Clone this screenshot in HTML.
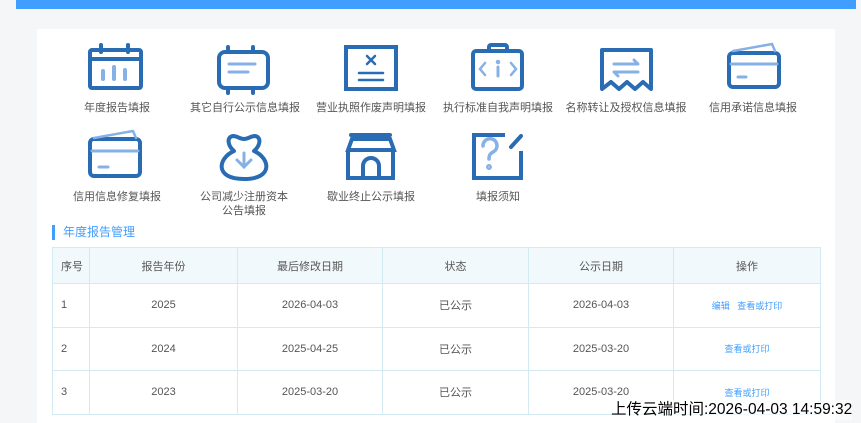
<!DOCTYPE html>
<html><head><meta charset="utf-8"><style>
*{margin:0;padding:0;box-sizing:border-box}
body{width:861px;height:423px;background:#f5f6f8;position:relative;overflow:hidden;font-family:"Liberation Sans","Noto Sans CJK SC",sans-serif;color:#333}
.bar{position:absolute;left:16px;top:0;width:840px;height:9px;background:#409eff}
.panel{position:absolute;left:37px;top:29px;width:798px;height:394px;background:#fff}
.lbl{position:absolute;font-size:11px;color:#555;text-align:center;width:128px;line-height:14px}
.title{position:absolute;left:52px;top:225px;font-size:12px;color:#409eff;line-height:15px;padding-left:8px;border-left:3px solid #409eff}
table{position:absolute;left:52px;top:247px;border-collapse:collapse;font-size:11px;color:#555}
td,th{border:1px solid #d3eaf3;text-align:center;font-weight:normal}
th{background:#f2f9fd;height:36px}
td{height:43.6px}
td.a{color:#409eff;font-size:9px}
.ts{position:absolute;left:611px;top:400px;font-size:15.5px;color:#000;font-family:"Liberation Sans","Noto Sans CJK SC",sans-serif;line-height:20px;background:rgba(255,255,255,.6)}
</style></head><body>
<div class="bar"></div>
<div class="panel"></div>
<svg style="position:absolute;left:0;top:0" width="861" height="423" fill="none" stroke-linecap="round">
<g stroke="#2a6cb3" stroke-width="4">
<rect x="90" y="50" width="51" height="38" rx="2"/><line x1="90" y1="59" x2="141" y2="59"/>
<line x1="101" y1="45" x2="101" y2="52"/><line x1="128" y1="45" x2="128" y2="52"/>
<rect x="219" y="52" width="49" height="36" rx="6"/>
<line x1="228" y1="47" x2="228" y2="52" /><line x1="253" y1="47" x2="253" y2="52"/>
<line x1="228" y1="88" x2="228" y2="93"/><line x1="253" y1="88" x2="253" y2="93"/>
<rect x="346" y="47" width="50" height="42" stroke-linecap="butt"/>
<path d="M367 56l8 8M375 56l-8 8" stroke-width="2.5"/>
<line x1="359" y1="73" x2="383" y2="73" stroke-width="2.5"/><line x1="359" y1="80" x2="383" y2="80" stroke-width="2.5"/>
<rect x="473" y="51" width="49" height="38" rx="3"/>
<path d="M489 51v-4a2 2 0 0 1 2-2h14a2 2 0 0 1 2 2v4"/>
<path d="M602 89V50h49v39l-8-7-8 7-8-7-8 7-8-7z" stroke-linejoin="round"/>
<rect x="729" y="53" width="50" height="34" rx="4"/>
<rect x="90" y="139" width="50" height="37" rx="4"/>
<path d="M234 151c-6-5-8-14-1-15 4 0 7 3 11 3s7-3 11-3c7 1 5 10-1 15 16 7 20 28-10 28s-26-21-10-28z" stroke-linejoin="round"/>
<path d="M348 150l4-11h38l4 11zM348 150v28h45v-28"/><line x1="351" y1="135" x2="390" y2="135"/>
<path d="M363 178v-12a8 8 0 0 1 16 0v12"/>
<path d="M505 135h-31v43h47v-27" stroke-linecap="butt"/>
<line x1="511" y1="147" x2="521" y2="136"/>
</g>
<g stroke="#86b1e6" stroke-width="4">
<line x1="103" y1="71" x2="103" y2="79"/><line x1="114" y1="67" x2="114" y2="79"/><line x1="125" y1="70" x2="125" y2="79"/>
<line x1="229" y1="64" x2="255" y2="64" stroke-width="3"/><line x1="229" y1="72" x2="248" y2="72" stroke-width="3"/>
<path d="M485 63l-5 6 5 6M511 63l5 6-5 6" stroke-width="2.5"/><line x1="498" y1="67" x2="498" y2="76" stroke-width="3"/><circle cx="498" cy="62" r="1" stroke-width="2.5"/>
<path d="M614 64h24l-4-4M638 72h-24l4 4" stroke-width="3" stroke-linejoin="round"/>
<path d="M733 51l39-7 3 7" stroke-width="2.5"/><line x1="731" y1="64" x2="777" y2="64" stroke-width="3"/><line x1="738" y1="77" x2="746" y2="77" stroke-width="3"/>
<path d="M94 138l39-7 3 7" stroke-width="2.5"/><line x1="92" y1="151" x2="138" y2="151" stroke-width="3"/><line x1="99" y1="167" x2="108" y2="167" stroke-width="3"/>
<path d="M244 153v14M237 160l7 7 7-7" stroke-width="3"/>
<path d="M483 146a7 7 0 1 1 10 6c-3 2-4 3-4 7" stroke-width="3.5"/><circle cx="489" cy="167" r="1.2" stroke-width="3.5"/>
</g>
</svg>
<div class="lbl" style="left:53px;top:101px">年度报告填报</div>
<div class="lbl" style="left:180px;top:101px;width:130px">其它自行公示信息填报</div>
<div class="lbl" style="left:306px;top:101px;width:130px">营业执照作废声明填报</div>
<div class="lbl" style="left:433px;top:101px;width:130px">执行标准自我声明填报</div>
<div class="lbl" style="left:561px;top:101px;width:130px">名称转让及授权信息填报</div>
<div class="lbl" style="left:689px;top:101px">信用承诺信息填报</div>
<div class="lbl" style="left:53px;top:190px">信用信息修复填报</div>
<div class="lbl" style="left:180px;top:190px">公司减少注册资本<br>公告填报</div>
<div class="lbl" style="left:307px;top:190px">歇业终止公示填报</div>
<div class="lbl" style="left:434px;top:190px">填报须知</div>
<div class="title">年度报告管理</div>
<table>
<tr><th style="width:37px;text-align:left;padding-left:8px">序号</th><th style="width:148px">报告年份</th><th style="width:145px">最后修改日期</th><th style="width:146px">状态</th><th style="width:145px">公示日期</th><th style="width:147px">操作</th></tr>
<tr><td style="text-align:left;padding-left:8px">1</td><td>2025</td><td>2026-04-03</td><td>已公示</td><td>2026-04-03</td><td class="a">编辑 &nbsp; 查看或打印</td></tr>
<tr><td style="text-align:left;padding-left:8px">2</td><td>2024</td><td>2025-04-25</td><td>已公示</td><td>2025-03-20</td><td class="a">查看或打印</td></tr>
<tr><td style="text-align:left;padding-left:8px">3</td><td>2023</td><td>2025-03-20</td><td>已公示</td><td>2025-03-20</td><td class="a">查看或打印</td></tr>
</table>
<div class="ts">上传云端时间:2026-04-03 14:59:32</div>
</body></html>
